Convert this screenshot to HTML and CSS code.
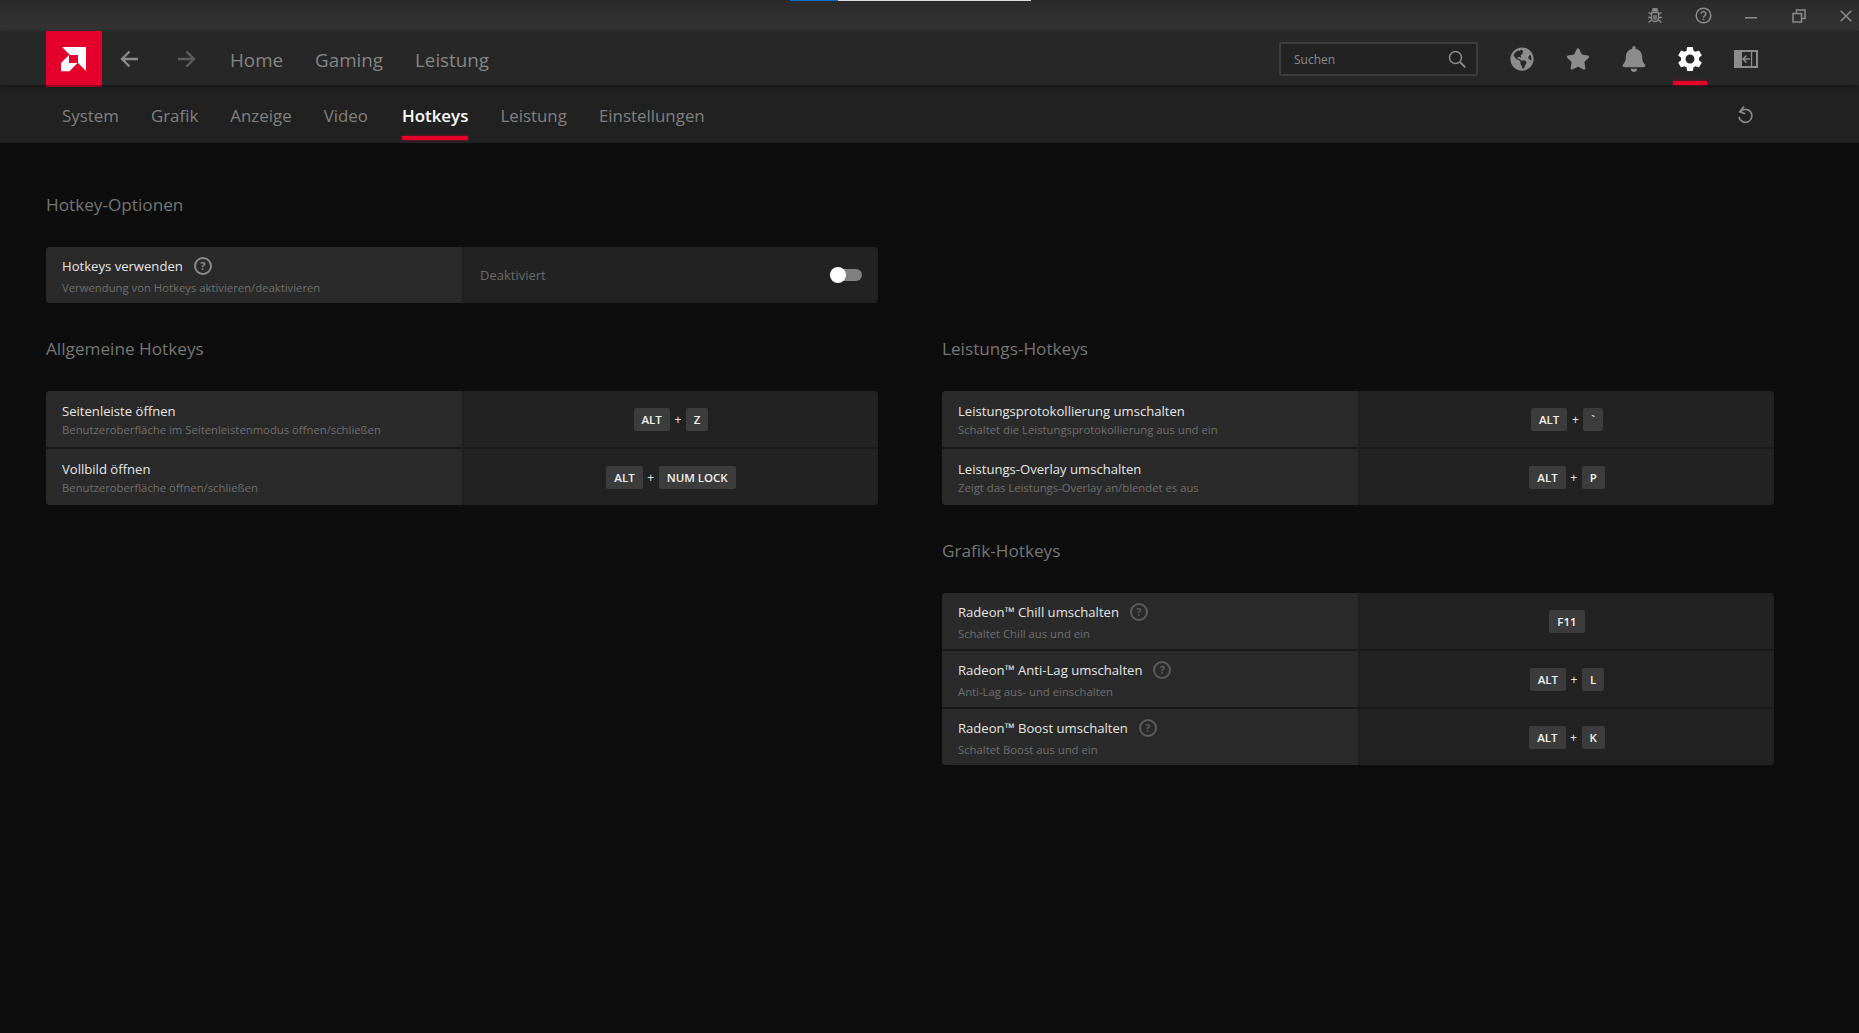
FILE: index.html
```html
<!DOCTYPE html>
<html lang="de">
<head>
<meta charset="utf-8">
<title>Radeon Hotkeys</title>
<link rel="stylesheet" href="styles.css">
</head>
<body>
<div class="app">
  <header class="titlebar">
    <span class="loader"><span class="loader-blue"></span><span class="loader-white"></span></span>
    <span class="tb-icon tb-icon-bug"><svg width="18" height="18" viewBox="0 0 18 18"><path fill="#8c8c8c" d="M6 5a3 3 0 0 1 6 0v.5H6z"/><path d="M5.500 6.500h7v5.500a3.500 3.500 0 0 1-7 0zM5.500 8.500L2.500 6.500M12.500 8.500l3-2M5 11.500H2M13 11.500h3M5.500 14l-3 2.500M12.500 14l3 2.500M8 9v3.800h2V9M6.500 2.500L8 4M11.500 2.500L10 4" fill="none" stroke="#8c8c8c" stroke-width="1.300"/></svg></span>
    <span class="tb-icon"><svg width="17" height="17" viewBox="0 0 17 17"><circle cx="8.500" cy="8.500" r="7.300" fill="none" stroke="#8c8c8c" stroke-width="1.500"/><path d="M6.200 6.800a2.300 2.300 0 1 1 3.500 2c-.8.500-1.200.9-1.200 1.700" fill="none" stroke="#8c8c8c" stroke-width="1.500"/><rect x="7.700" y="11.600" width="1.600" height="1.600" fill="#8c8c8c"/></svg></span>
    <span class="tb-icon"><svg width="12" height="12" viewBox="0 0 12 12"><rect x="0" y="7" width="12" height="1.500" fill="#8c8c8c"/></svg></span>
    <span class="tb-icon"><svg width="14" height="14" viewBox="0 0 14 14"><path d="M1 4.500h8.500V13H1zM4.500 4.500V1H13v8.500H9.500" fill="none" stroke="#8c8c8c" stroke-width="1.500"/></svg></span>
    <span class="tb-icon"><svg width="12" height="12" viewBox="0 0 12 12"><path d="M.7.7l10.600 10.600M11.300.7L.7 11.300" stroke="#8c8c8c" stroke-width="1.500"/></svg></span>
  </header>

  <nav class="topnav">
    <div class="logo"><svg width="26" height="26" viewBox="0 0 26 26"><path fill="#fff" d="M1 0h24v24l-8-8V8H9zM0 16l8-8v8h8.500L8.500 24.300H0z"/></svg></div>
    <span class="arrow"><svg width="18" height="18" viewBox="0 0 18 18"><path d="M18 9H2M9.500 1.500L2 9l7.500 7.500" fill="none" stroke="#8a8a8a" stroke-width="2.400"/></svg></span>
    <span class="arrow arrow-next"><svg width="18" height="18" viewBox="0 0 18 18"><path d="M0 9h16M8.500 1.500L16 9l-7.500 7.500" fill="none" stroke="#5e5e5e" stroke-width="2.400"/></svg></span>
    <a class="mainlink mainlink-first">Home</a>
    <a class="mainlink">Gaming</a>
    <a class="mainlink">Leistung</a>
    <div class="search">
      <span class="search-text">Suchen</span>
      <svg width="18" height="18" viewBox="0 0 18 18"><circle cx="7.500" cy="7.500" r="6" fill="none" stroke="#8c8c8c" stroke-width="1.500"/><path d="M12 12l5.300 5.300" stroke="#8c8c8c" stroke-width="1.800"/></svg>
    </div>
    <div class="nav-icons">
      <span class="nav-icon"><svg width="24" height="24" viewBox="0 0 496 512"><path fill="#8c8c8c" d="M248 8C111.03 8 0 119.03 0 256s111.03 248 248 248 248-111.03 248-248S384.97 8 248 8zm82.29 357.6c-3.900 3.880-7.990 7.950-11.310 11.280-2.990 3-5.100 6.700-6.170 10.710-1.510 5.660-2.730 11.380-4.770 16.870l-17.390 46.850c-13.760 3-28 4.690-42.650 4.690v-27.380c1.690-12.620-7.640-36.260-22.630-51.250-6-6-9.370-14.140-9.370-22.630v-32.010c0-11.640-6.270-22.340-16.460-27.970-14.370-7.950-34.810-19.060-48.810-26.110-11.480-5.780-22.100-13.140-31.650-21.750l-.8-.72a114.792 114.792 0 0 1-18.060-20.740c-9.380-13.770-24.660-36.420-34.590-51.140 20.470-45.500 57.360-82.040 103.200-101.890l24.010 12.010C203.480 89.740 216 82.010 216 70.110v-11.300c7.990-1.290 16.120-2.110 24.390-2.420l28.300 28.300c6.250 6.250 6.250 16.380 0 22.630L264 112l-10.340 10.340c-3.120 3.120-3.120 8.190 0 11.310l4.690 4.690c3.120 3.120 3.120 8.190 0 11.310l-8 8a8.008 8.008 0 0 1-5.660 2.340h-8.990c-2.080 0-4.080.81-5.580 2.270l-9.920 9.650a8.008 8.008 0 0 0-1.580 9.310l15.590 31.190c2.660 5.320-1.210 11.580-7.150 11.580h-5.640c-1.930 0-3.790-.7-5.240-1.960l-9.280-8.060a16.017 16.017 0 0 0-15.550-3.100l-31.170 10.390a11.950 11.950 0 0 0-8.170 11.340c0 4.530 2.560 8.660 6.610 10.690l11.080 5.540c9.410 4.710 19.790 7.160 30.310 7.160s22.590 27.290 32 32h66.750c8.490 0 16.620 3.370 22.630 9.370l13.690 13.690a30.503 30.503 0 0 1 8.930 21.570 46.536 46.536 0 0 1-13.720 32.980zM417 274.250c-5.790-1.450-10.840-5-14.150-9.970l-17.980-26.970a23.970 23.970 0 0 1 0-26.620l19.590-29.380c2.320-3.470 5.500-6.290 9.240-8.150l12.980-6.490C440.200 193.590 448 223.870 448 256c0 8.670-.74 17.160-1.820 25.540L417 274.250z"/></svg></span>
      <span class="nav-icon"><svg width="24" height="22" viewBox="0 0 576 512"><path fill="#8c8c8c" d="M259.300 17.800L194 150.200 47.900 171.500c-26.200 3.800-36.700 36.100-17.700 54.600l105.700 103-25 145.500c-4.500 26.300 23.200 46 46.400 33.700L288 439.600l130.700 68.700c23.200 12.200 50.900-7.400 46.400-33.700l-25-145.500 105.700-103c19-18.500 8.500-50.800-17.700-54.600L382 150.200 316.700 17.800c-11.700-23.600-45.600-23.900-57.400 0z"/></svg></span>
      <span class="nav-icon"><svg width="24" height="26" viewBox="0 0 448 512"><path fill="#8c8c8c" d="M224 512c35.320 0 63.970-28.650 63.970-64H160.030c0 35.350 28.650 64 63.970 64zm215.390-149.710c-19.320-20.760-55.470-51.990-55.470-154.290 0-77.700-54.480-139.900-127.940-155.160V32c0-17.670-14.320-32-31.980-32s-31.980 14.330-31.980 32v20.840C118.560 68.100 64.080 130.300 64.080 208c0 102.300-36.150 133.530-55.470 154.290-6 6.450-8.660 14.160-8.610 21.710.11 16.400 12.980 32 32.100 32h383.800c19.120 0 32-15.600 32.100-32 .05-7.550-2.610-15.270-8.610-21.710z"/></svg></span>
      <span class="nav-icon nav-icon-active"><svg width="30" height="30" viewBox="0 0 24 24"><path fill="#fff" d="M19.140 12.940c.04-.3.060-.61.060-.94 0-.32-.02-.64-.07-.94l2.030-1.580c.18-.14.230-.41.120-.61l-1.920-3.320c-.12-.22-.37-.29-.59-.22l-2.390.96c-.5-.38-1.030-.7-1.620-.94l-.36-2.540c-.04-.24-.24-.41-.48-.41h-3.840c-.24 0-.43.170-.47.41l-.36 2.540c-.59.240-1.130.570-1.620.94l-2.390-.96c-.22-.08-.47 0-.59.220L2.740 8.870c-.12.210-.08.470.12.610l2.030 1.580c-.05.3-.09.630-.09.940s.02.640.07.940l-2.030 1.580c-.18.140-.23.410-.12.610l1.920 3.320c.12.220.37.290.59.220l2.390-.96c.5.380 1.030.7 1.620.94l.36 2.540c.05.240.24.410.48.410h3.840c.24 0 .44-.17.47-.41l.36-2.540c.59-.24 1.130-.56 1.620-.94l2.390.96c.22.080.47 0 .59-.22l1.920-3.320c.12-.22.070-.47-.12-.61l-2.010-1.580zM12 15.600c-1.980 0-3.600-1.620-3.600-3.600s1.620-3.600 3.600-3.600 3.600 1.620 3.600 3.600-1.620 3.600-3.600 3.600z"/></svg></span>
      <span class="nav-icon"><svg width="24" height="18" viewBox="0 0 24 18"><path fill="#8c8c8c" d="M0 0h24v18H0z"/><path fill="#272727" d="M8 2h14v14H8z"/><path d="M17.500 2v14" stroke="#8c8c8c" stroke-width="1.300"/><path d="M16 9H9M12.500 5.500L9 9l3.500 3.500" fill="none" stroke="#8c8c8c" stroke-width="1.500"/></svg></span>
    </div>
  </nav>

  <nav class="subnav">
    <a class="sublink">System</a>
    <a class="sublink">Grafik</a>
    <a class="sublink">Anzeige</a>
    <a class="sublink">Video</a>
    <a class="sublink sublink-active">Hotkeys</a>
    <a class="sublink">Leistung</a>
    <a class="sublink">Einstellungen</a>
    <span class="reset"><svg width="18" height="20" viewBox="0 0 18 20"><path d="M4.300 6.800A6.500 6.500 0 1 1 3 12" fill="none" stroke="#8c8c8c" stroke-width="1.700"/><path d="M8 1.500L3.800 6.800l5.400 1.900" fill="none" stroke="#8c8c8c" stroke-width="1.700"/></svg></span>
  </nav>

  <main class="content">
    <section class="section section-half">
      <h2 class="section-title">Hotkey-Optionen</h2>
      <div class="card">
        <div class="row">
          <div class="row-label row-label-help">
            <div class="row-title">Hotkeys verwenden<span class="help help-light">?</span></div>
            <div class="row-sub">Verwendung von Hotkeys aktivieren/deaktivieren</div>
          </div>
          <div class="row-value row-value-toggle">
            <span class="state">Deaktiviert</span>
            <span class="toggle"><span class="knob"></span></span>
          </div>
        </div>
      </div>
    </section>

    <div class="columns">
      <section class="section">
        <h2 class="section-title">Allgemeine Hotkeys</h2>
        <div class="card">
          <div class="row">
            <div class="row-label">
              <div class="row-title">Seitenleiste öffnen</div>
              <div class="row-sub">Benutzeroberfläche im Seitenleistenmodus öffnen/schließen</div>
            </div>
            <div class="row-value"><kbd class="key">ALT</kbd><span class="plus">+</span><kbd class="key">Z</kbd></div>
          </div>
          <div class="row">
            <div class="row-label">
              <div class="row-title">Vollbild öffnen</div>
              <div class="row-sub">Benutzeroberfläche öffnen/schließen</div>
            </div>
            <div class="row-value"><kbd class="key">ALT</kbd><span class="plus">+</span><kbd class="key">NUM LOCK</kbd></div>
          </div>
        </div>
      </section>

      <div class="column">
        <section class="section">
          <h2 class="section-title">Leistungs-Hotkeys</h2>
          <div class="card">
            <div class="row">
              <div class="row-label">
                <div class="row-title">Leistungsprotokollierung umschalten</div>
                <div class="row-sub">Schaltet die Leistungsprotokollierung aus und ein</div>
              </div>
              <div class="row-value"><kbd class="key">ALT</kbd><span class="plus">+</span><kbd class="key">`</kbd></div>
            </div>
            <div class="row">
              <div class="row-label">
                <div class="row-title">Leistungs-Overlay umschalten</div>
                <div class="row-sub">Zeigt das Leistungs-Overlay an/blendet es aus</div>
              </div>
              <div class="row-value"><kbd class="key">ALT</kbd><span class="plus">+</span><kbd class="key">P</kbd></div>
            </div>
          </div>
        </section>
        <section class="section">
          <h2 class="section-title">Grafik-Hotkeys</h2>
          <div class="card">
            <div class="row">
              <div class="row-label row-label-help">
                <div class="row-title">Radeon™ Chill umschalten<span class="help">?</span></div>
                <div class="row-sub">Schaltet Chill aus und ein</div>
              </div>
              <div class="row-value"><kbd class="key">F11</kbd></div>
            </div>
            <div class="row">
              <div class="row-label row-label-help">
                <div class="row-title">Radeon™ Anti-Lag umschalten<span class="help">?</span></div>
                <div class="row-sub">Anti-Lag aus- und einschalten</div>
              </div>
              <div class="row-value"><kbd class="key">ALT</kbd><span class="plus">+</span><kbd class="key">L</kbd></div>
            </div>
            <div class="row">
              <div class="row-label row-label-help">
                <div class="row-title">Radeon™ Boost umschalten<span class="help">?</span></div>
                <div class="row-sub">Schaltet Boost aus und ein</div>
              </div>
              <div class="row-value"><kbd class="key">ALT</kbd><span class="plus">+</span><kbd class="key">K</kbd></div>
            </div>
          </div>
        </section>
      </div>
    </div>
  </main>
</div>
</body>
</html>
```
FILE: styles.css
```css
* { box-sizing: border-box; }
html, body { margin: 0; height: 100%; }
body {
  background: #0d0d0d;
  font-family: "Open Sans", "Noto Sans", "Liberation Sans", sans-serif;
  overflow: hidden;
}
.app { display: flex; flex-direction: column; height: 100vh; }

.titlebar {
  position: relative;
  height: 31px;
  flex: none;
  display: flex;
  align-items: center;
  justify-content: flex-end;
  gap: 27.500px;
  padding-right: 3px;
  background: linear-gradient(#2a2a2a, #343434);
}
.loader { position: absolute; top: 0; left: 790px; display: flex; height: 1px; }
.loader-blue { width: 48px; background: #0a6ccf; }
.loader-white { width: 193px; background: #dcdcdc; }
.tb-icon { width: 20px; height: 20px; display: flex; align-items: center; justify-content: center; }
.tb-icon-bug { margin: 0 1px 2px -1px; }

.topnav {
  height: 54px;
  flex: none;
  display: flex;
  align-items: center;
  padding: 2px 0 0 46px;
  background: #272727;
  position: relative;
  z-index: 2;
  box-shadow: 0 1px 4px rgba(0, 0, 0, .45);
}
.logo {
  align-self: flex-start;
  margin-top: -2px;
  width: 56px;
  height: 56px;
  background: #e4002b;
  border-bottom: 2px solid #99001d;
  display: flex;
  align-items: center;
  justify-content: center;
  padding: 3px 0 0 0;
  position: relative;
  z-index: 3;
}
.arrow { display: flex; margin-left: 18px; }
.arrow-next { margin-left: 40px; }
.mainlink { font-size: 18.800px; color: #858585; margin: 2px 0 0 32px; }
.mainlink-first { margin-left: 34px; }
.search {
  margin-left: auto;
  width: 199px;
  height: 34px;
  border: 2px solid #3d3d3d;
  border-radius: 2px;
  background: #222;
  display: flex;
  align-items: center;
  justify-content: space-between;
  padding: 0 10px 0 13px;
}
.search-text { font-size: 12px; color: #8a8a8a; }
.nav-icons { display: flex; align-items: center; gap: 32px; margin-left: 32px; margin-right: 101px; }
.nav-icon { position: relative; width: 24px; height: 52px; display: flex; align-items: center; justify-content: center; }
.nav-icon svg { flex: none; }
.nav-icon-active::after {
  content: "";
  position: absolute;
  left: -5px;
  right: -5px;
  bottom: 0;
  height: 4px;
  background: #e4002b;
  box-shadow: 0 0 3px rgba(228, 0, 43, .6);
}

.subnav {
  height: 58px;
  flex: none;
  display: flex;
  align-items: center;
  gap: 32px;
  padding: 2px 105px 0 62px;
  background: #212121;
}
.sublink { font-size: 16.900px; color: #808080; position: relative; }
.sublink-active { color: #fff; font-weight: 600; margin-left: 2px; }
.sublink-active::after {
  content: "";
  position: absolute;
  left: 0;
  right: 0;
  bottom: -13px;
  height: 4px;
  background: #e4002b;
  box-shadow: 0 0 3px rgba(228, 0, 43, .6);
}
.reset { margin-left: auto; display: flex; }

.content { padding: 49px 85px 0 46px; }
.section-half { width: 832px; }
.columns { display: grid; grid-template-columns: 832px 832px; column-gap: 64px; }
.section { margin-bottom: 33px; }
.section-title {
  margin: 0 0 31px;
  height: 24px;
  line-height: 25px;
  font-size: 17.200px;
  font-weight: 400;
  color: #757575;
}
.card { display: flex; flex-direction: column; gap: 2px; background: #1a1a1a; border-radius: 4px; overflow: hidden; }
.row { display: flex; height: 56px; }
.row-label {
  width: 418px;
  padding: 10px 0 0 16px;
  background: #2a2a2a;
  border-right: 2px solid #1e1e1e;
}
.row-label-help { padding-top: 9px; }
.row-label-help .row-sub { margin-top: 3px; }
.row-title { display: flex; align-items: center; height: 20px; font-size: 13.100px; line-height: 20px; color: #e6e6e6; }
.row-sub { font-size: 11.300px; line-height: 18px; color: #6f6f6f; }
.help {
  width: 18px;
  height: 18px;
  margin-left: 11px;
  border: 2px solid #5c5c5c;
  border-radius: 50%;
  display: flex;
  align-items: center;
  justify-content: center;
  font-size: 11px;
  font-weight: 700;
  color: #5c5c5c;
}
.help-light { border-color: #8a8a8a; color: #8a8a8a; }
.row-value {
  flex: 1;
  display: flex;
  align-items: center;
  justify-content: center;
  background: #222;
}
.row-value-toggle { justify-content: space-between; padding: 0 16px 0 16px; }
.state { font-size: 13px; color: #6a6a6a; }
.toggle { width: 32px; height: 12px; border-radius: 6px; background: #808080; display: flex; align-items: center; }
.knob { width: 16px; height: 16px; border-radius: 50%; background: #fff; flex: none; }
.key {
  display: flex;
  align-items: center;
  height: 23px;
  padding: 0 8px;
  background: #3c3c3c;
  border-radius: 2px;
  font-family: "Open Sans", "Noto Sans", "Liberation Sans", sans-serif;
  font-size: 11.500px;
  font-weight: 600;
  color: #f2f2f2;
}
.plus { width: 16px; text-align: center; font-size: 12px; color: #e6e6e6; }
```
